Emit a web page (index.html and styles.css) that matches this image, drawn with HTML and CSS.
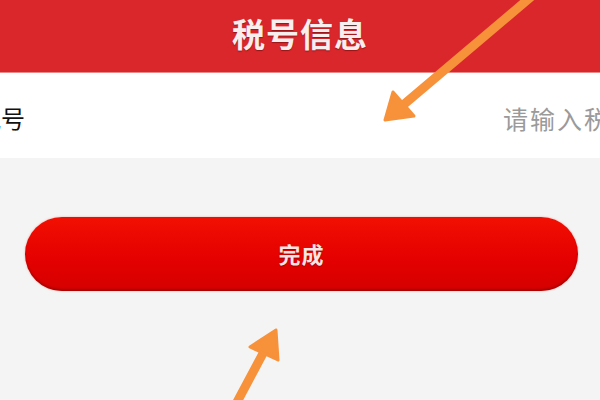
FILE: index.html
```html
<!DOCTYPE html>
<html lang="zh-CN">
<head>
<meta charset="utf-8">
<title>税号信息</title>
<link rel="stylesheet" href="styles.css">
</head>
<body>
<div class="page">
  <header class="topbar">
    <h1 class="title">税号信息</h1>
  </header>
  <div class="row">
    <span class="label">税号</span>
    <span class="placeholder">请输入税号</span>
  </div>
  <div class="actions">
    <button class="done">完成</button>
  </div>
  <svg class="arrows" width="600" height="400" viewBox="0 0 600 400">
    <g fill="#f7913a" stroke="#f7913a" stroke-linejoin="round">
      <line x1="532" y1="-4" x2="402" y2="106" stroke-width="9" stroke-linecap="round"/>
      <polygon points="385,120 393,92 414,116" stroke-width="3"/>
      <line x1="236" y1="404" x2="268" y2="344" stroke-width="9" stroke-linecap="round"/>
      <polygon points="276,330 250,347 278,360" stroke-width="3"/>
    </g>
  </svg>
</div>
</body>
</html>
```
FILE: styles.css
```css
html, body {
  margin: 0;
  padding: 0;
}
body {
  background: #f4f4f4;
  font-family: "Noto Sans CJK SC", "Noto Sans", sans-serif;
}
.page {
  position: relative;
  width: 600px;
  height: 400px;
  overflow: hidden;
  background: #f4f4f4;
}
.topbar {
  height: 72px;
  background: #d9272c;
  display: flex;
  align-items: center;
  justify-content: center;
  border-bottom: 1px solid #e88a8a;
}
.title {
  margin: 0;
  font-size: 33px;
  font-weight: 700;
  color: #f9eeee;
  letter-spacing: 1px;
  text-shadow: 0 1px 1px rgba(90, 0, 0, 0.5);
  line-height: 1;
  padding-bottom: 6px;
}
.row {
  height: 85px;
  background: #ffffff;
  display: grid;
  grid-template-columns: 503px auto;
  align-items: center;
  overflow: hidden;
}
.label {
  margin-left: -23px;
  font-size: 24px;
  color: #111;
  white-space: nowrap;
  padding-top: 4px;
}
.placeholder {
  font-size: 25px;
  color: #9a9a9a;
  white-space: nowrap;
  letter-spacing: 2px;
  padding-top: 4px;
}
.actions {
  padding: 59px 22px 0 25px;
}
.done {
  display: block;
  width: 100%;
  height: 74px;
  border: none;
  border-radius: 37px;
  background: linear-gradient(#f20f02, #e30000 60%, #d60000);
  box-shadow: inset 0 -2px 2px rgba(120, 0, 0, 0.45), 0 0 2px rgba(230, 80, 60, 0.5);
  color: #f8e4e4;
  font-family: "Noto Sans CJK SC", sans-serif;
  font-size: 22px;
  font-weight: 700;
  letter-spacing: 1px;
  text-shadow: 0 1px 1px rgba(90, 0, 0, 0.5);
  padding: 0 0 2px 0;
}
.arrows {
  position: absolute;
  left: 0;
  top: 0;
  pointer-events: none;
}
```
